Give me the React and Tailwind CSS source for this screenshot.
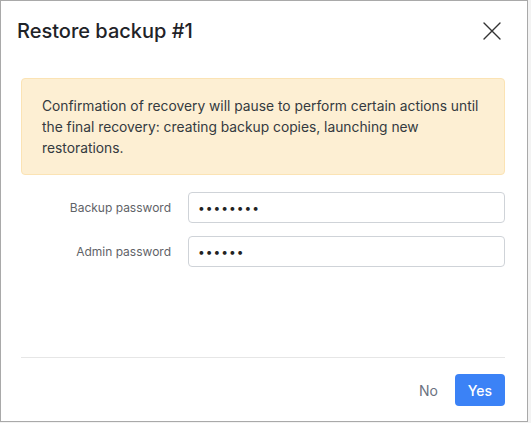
import { useState } from "react";

function CloseIcon() {
  return (
    <svg width="18" height="18" viewBox="0 0 18 18" fill="none">
      <path d="M1 1L17 17M17 1L1 17" stroke="#333" strokeWidth="1.4" strokeLinecap="round" />
    </svg>
  );
}

function PasswordRow({ label, value }) {
  return (
    <div className="flex items-center">
      <label className="w-[150px] shrink-0 text-right text-[12px] text-[#5f6368]">{label}</label>
      <input
        type="password"
        defaultValue={value}
        className="ml-[17px] h-[31px] w-[317px] rounded-[4px] border border-[#cfd3d8] px-[9px] text-[12px] tracking-[1px] text-[#222] outline-none"
      />
    </div>
  );
}

export default function App() {
  const [open] = useState(true);

  return (
    <div
      className="h-[423px] w-[531px] bg-[#f3f3f3]"
      style={{ fontFamily: "Inter, 'Noto Sans', sans-serif" }}
    >
      {open && (
        <div className="flex h-[422px] w-[528px] flex-col border border-[#a9a9a9] bg-white">
          {/* Header */}
          <div className="flex items-center justify-between pl-[16px] pr-[26px] pt-[17px]">
            <h2 className="text-[20px] font-medium leading-[26px] text-[#1f2328]">Restore backup #1</h2>
            <button className="flex items-center justify-center">
              <CloseIcon />
            </button>
          </div>

          {/* Body */}
          <div className="ml-[20px] mt-[34px] w-[484px]">
            <div className="rounded-[4px] border border-[#fbe3b4] bg-[#fdefd3] px-[20px] pb-[15px] pt-[17px] text-[13.8px] leading-[21px] text-[#343a40]">
              Confirmation of recovery will pause to perform certain actions until the final recovery: creating backup
              copies, launching new restorations.
            </div>

            <div className="mt-[17px] flex flex-col gap-[13px]">
              <PasswordRow label="Backup password" value="12345678" />
              <PasswordRow label="Admin password" value="123456" />
            </div>
          </div>

          <div className="flex-1" />

          {/* Footer */}
          <div className="ml-[20px] w-[484px] border-t border-[#e6e6e6] pb-[15px] pt-[16px]">
            <div className="flex items-center justify-end gap-[17px]">
              <button className="text-[14px] text-[#6b7280]">No</button>
              <button className="h-[32px] w-[50px] rounded-[4px] bg-[#3b82f6] text-[14px] font-medium text-white">
                Yes
              </button>
            </div>
          </div>
        </div>
      )}
    </div>
  );
}
